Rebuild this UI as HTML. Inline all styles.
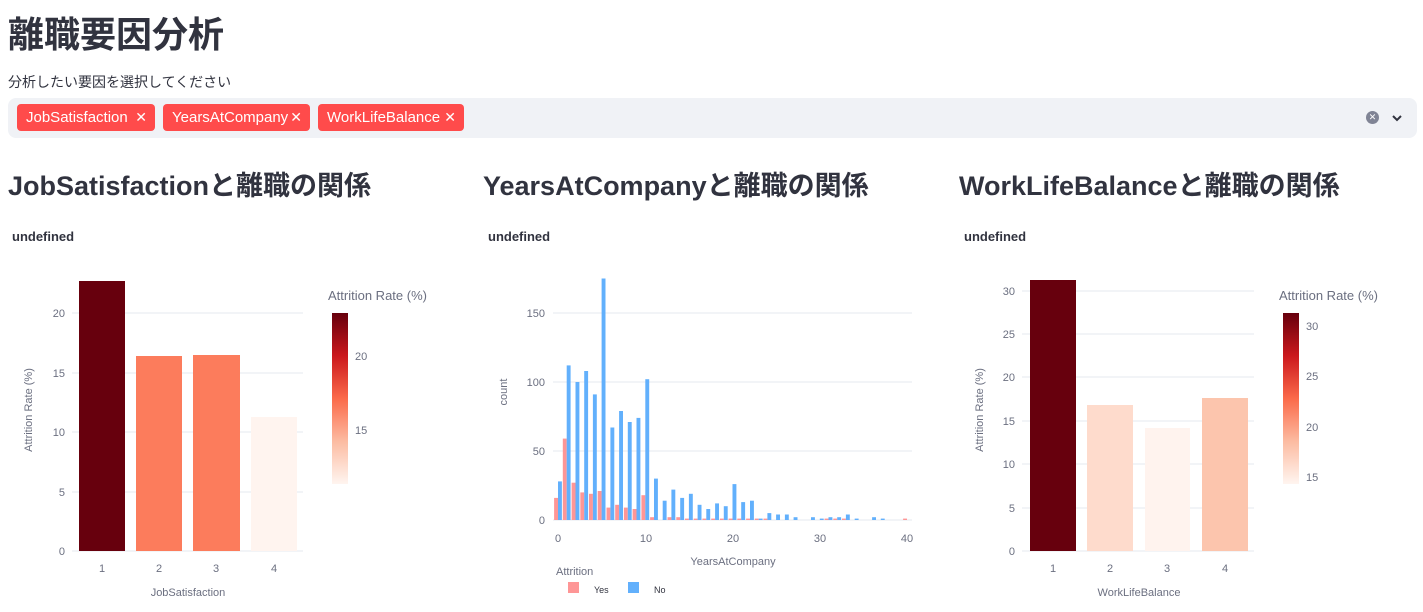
<!DOCTYPE html>
<html><head><meta charset="utf-8"><style>
body{margin:0;width:1423px;height:612px;background:#fff;font-family:"Liberation Sans","Noto Sans CJK JP",sans-serif;color:#31333f;position:relative;overflow:hidden}
.a{position:absolute;white-space:nowrap}
h1{position:absolute;left:8px;top:6px;margin:0;font-size:36px;font-weight:700;font-family:"Noto Sans CJK JP",sans-serif;color:#31333f}
.sel{position:absolute;left:8px;top:98px;width:1409px;height:40px;background:#f0f2f6;border-radius:8px}
.tag{position:absolute;top:6px;height:27px;background:#ff4b4b;color:#fff;border-radius:4px;font-size:15px;line-height:27px;padding-left:9px;box-sizing:border-box}
.tag span{position:absolute;right:8px;top:0;font-size:14px}
h2{position:absolute;top:164px;margin:0;font-size:27px;font-weight:700;font-family:"Liberation Sans","Noto Sans CJK JP",sans-serif}
</style></head><body>
<h1>離職要因分析</h1>
<div class="a" style="left:8px;top:72px;font-size:14px;font-family:'Noto Sans CJK JP',sans-serif">分析したい要因を選択してください</div>
<div class="sel">
<div class="tag" style="left:9px;width:138px">JobSatisfaction<span>✕</span></div>
<div class="tag" style="left:155px;width:147px">YearsAtCompany<span>✕</span></div>
<div class="tag" style="left:310px;width:146px">WorkLifeBalance<span>✕</span></div>
<div style="position:absolute;left:1358px;top:13px;width:13px;height:13px;border-radius:50%;background:#808495;color:#fff;font-size:9px;line-height:13px;text-align:center">✕</div>
<svg style="position:absolute;left:1383px;top:15px" width="12" height="10"><path d="M2 3 L6 7 L10 3" stroke="#31333f" stroke-width="2" fill="none"/></svg>
</div>
<h2 style="left:8px">JobSatisfactionと離職の関係</h2>
<h2 style="left:483px">YearsAtCompanyと離職の関係</h2>
<h2 style="left:959px">WorkLifeBalanceと離職の関係</h2>
<svg class="a" style="left:0;top:0" width="1423" height="612" font-family="Liberation Sans, sans-serif">
<defs>
<linearGradient id="r" x1="0" y1="1" x2="0" y2="0"><stop offset="0" stop-color="#fff5f0"/><stop offset="0.25" stop-color="#fcbba1"/><stop offset="0.5" stop-color="#fb6a4a"/><stop offset="0.75" stop-color="#cb181d"/><stop offset="1" stop-color="#67000d"/></linearGradient>
</defs>
<g font-size="13" font-weight="700" fill="#31333f"><text x="12" y="241">undefined</text><text x="488" y="241">undefined</text><text x="964" y="241">undefined</text></g>
<!-- left chart -->
<g stroke="#e5e8ef" stroke-width="1"><line x1="72" x2="303" y1="313" y2="313"/><line x1="72" x2="303" y1="373" y2="373"/><line x1="72" x2="303" y1="432" y2="432"/><line x1="72" x2="303" y1="492" y2="492"/><line x1="72" x2="303" y1="551" y2="551"/></g>
<rect x="79" y="281" width="46" height="270" fill="#67000d"/>
<rect x="136" y="356" width="46" height="195" fill="#fc7c5c"/>
<rect x="193" y="355" width="47" height="196" fill="#fc7c5c"/>
<rect x="251" y="417" width="46" height="134" fill="#fff4ef"/>
<g font-size="11" fill="#6b6f80" text-anchor="end"><text x="65" y="317">20</text><text x="65" y="377">15</text><text x="65" y="436">10</text><text x="65" y="496">5</text><text x="65" y="555">0</text></g>
<g font-size="11" fill="#6b6f80" text-anchor="middle"><text x="102" y="572">1</text><text x="159" y="572">2</text><text x="216" y="572">3</text><text x="274" y="572">4</text><text x="188" y="596">JobSatisfaction</text></g>
<text transform="translate(32,410) rotate(-90)" font-size="11" fill="#6b6f80" text-anchor="middle">Attrition Rate (%)</text>
<text x="328" y="300" font-size="13" fill="#6b6f80">Attrition Rate (%)</text>
<rect x="332" y="313" width="16" height="171" fill="url(#r)"/>
<g font-size="11" fill="#6b6f80"><text x="355" y="360">20</text><text x="355" y="434">15</text></g>
<!-- right chart -->
<g stroke="#e5e8ef"><line x1="1022" x2="1254" y1="291" y2="291"/><line x1="1022" x2="1254" y1="334" y2="334"/><line x1="1022" x2="1254" y1="377" y2="377"/><line x1="1022" x2="1254" y1="421" y2="421"/><line x1="1022" x2="1254" y1="464" y2="464"/><line x1="1022" x2="1254" y1="508" y2="508"/><line x1="1022" x2="1254" y1="551" y2="551"/></g>
<rect x="1030" y="280" width="46" height="271" fill="#67000d"/>
<rect x="1087" y="405" width="46" height="146" fill="#fedbcc"/>
<rect x="1145" y="428" width="45" height="123" fill="#fff3ee"/>
<rect x="1202" y="398" width="46" height="153" fill="#fcc5ad"/>
<g font-size="11" fill="#6b6f80" text-anchor="end"><text x="1015" y="295">30</text><text x="1015" y="338">25</text><text x="1015" y="381">20</text><text x="1015" y="425">15</text><text x="1015" y="468">10</text><text x="1015" y="512">5</text><text x="1015" y="555">0</text></g>
<g font-size="11" fill="#6b6f80" text-anchor="middle"><text x="1053" y="572">1</text><text x="1110" y="572">2</text><text x="1167" y="572">3</text><text x="1225" y="572">4</text><text x="1139" y="596">WorkLifeBalance</text></g>
<text transform="translate(983,410) rotate(-90)" font-size="11" fill="#6b6f80" text-anchor="middle">Attrition Rate (%)</text>
<text x="1279" y="300" font-size="13" fill="#6b6f80">Attrition Rate (%)</text>
<rect x="1283" y="313" width="16" height="171" fill="url(#r)"/>
<g font-size="11" fill="#6b6f80"><text x="1306" y="330">30</text><text x="1306" y="380">25</text><text x="1306" y="431">20</text><text x="1306" y="481">15</text></g>
<!-- histogram -->
<g stroke="#e5e8ef"><line x1="553" x2="912" y1="313" y2="313"/><line x1="553" x2="912" y1="382" y2="382"/><line x1="553" x2="912" y1="451" y2="451"/><line x1="553" x2="912" y1="520" y2="520"/></g>
<g transform="translate(0,520) scale(1,-1)">
<g fill="#fe9696">
<rect x="554.1" y="0" width="3.9" height="22.1"/><rect x="562.8" y="0" width="3.9" height="81.4"/><rect x="571.6" y="0" width="3.9" height="37.3"/><rect x="580.3" y="0" width="3.9" height="27.6"/><rect x="589" y="0" width="3.9" height="26.2"/><rect x="597.7" y="0" width="3.9" height="29"/><rect x="606.5" y="0" width="3.9" height="12.4"/><rect x="615.2" y="0" width="3.9" height="15.2"/><rect x="623.9" y="0" width="3.9" height="12.4"/><rect x="632.6" y="0" width="3.9" height="11"/><rect x="641.4" y="0" width="3.9" height="24.8"/><rect x="650.1" y="0" width="3.9" height="2.8"/><rect x="667.5" y="0" width="3.9" height="2.8"/><rect x="676.3" y="0" width="3.9" height="2.8"/><rect x="685" y="0" width="3.9" height="1.4"/><rect x="693.7" y="0" width="3.9" height="1.4"/><rect x="702.4" y="0" width="3.9" height="1.4"/><rect x="711.2" y="0" width="3.9" height="1.4"/><rect x="719.9" y="0" width="3.9" height="1.4"/><rect x="728.6" y="0" width="3.9" height="1.4"/><rect x="737.3" y="0" width="3.9" height="1.4"/><rect x="746.1" y="0" width="3.9" height="1.4"/><rect x="754.8" y="0" width="3.9" height="1.4"/><rect x="763.5" y="0" width="3.9" height="1.4"/><rect x="824.6" y="0" width="3.9" height="1.4"/><rect x="833.3" y="0" width="3.9" height="1.4"/><rect x="842" y="0" width="3.9" height="1.4"/><rect x="903.1" y="0" width="3.9" height="1.4"/>
</g>
<g fill="#62b0fc">
<rect x="558" y="0" width="3.9" height="38.6"/><rect x="566.7" y="0" width="3.9" height="154.6"/><rect x="575.5" y="0" width="3.9" height="138"/><rect x="584.2" y="0" width="3.9" height="149"/><rect x="592.9" y="0" width="3.9" height="125.6"/><rect x="601.6" y="0" width="3.9" height="241.5"/><rect x="610.4" y="0" width="3.9" height="92.5"/><rect x="619.1" y="0" width="3.9" height="109"/><rect x="627.8" y="0" width="3.9" height="98"/><rect x="636.5" y="0" width="3.9" height="102.1"/><rect x="645.3" y="0" width="3.9" height="140.8"/><rect x="654" y="0" width="3.9" height="41.4"/><rect x="662.7" y="0" width="3.9" height="19.3"/><rect x="671.4" y="0" width="3.9" height="30.4"/><rect x="680.2" y="0" width="3.9" height="22.1"/><rect x="688.9" y="0" width="3.9" height="26.2"/><rect x="697.6" y="0" width="3.9" height="15.2"/><rect x="706.3" y="0" width="3.9" height="11"/><rect x="715.1" y="0" width="3.9" height="16.6"/><rect x="723.8" y="0" width="3.9" height="13.8"/><rect x="732.5" y="0" width="3.9" height="35.9"/><rect x="741.2" y="0" width="3.9" height="17.9"/><rect x="750" y="0" width="3.9" height="19.3"/><rect x="758.7" y="0" width="3.9" height="1.4"/><rect x="767.4" y="0" width="3.9" height="6.9"/><rect x="776.1" y="0" width="3.9" height="5.5"/><rect x="784.9" y="0" width="3.9" height="5.5"/><rect x="793.6" y="0" width="3.9" height="2.8"/><rect x="811" y="0" width="3.9" height="2.8"/><rect x="819.8" y="0" width="3.9" height="1.4"/><rect x="828.5" y="0" width="3.9" height="2.8"/><rect x="837.2" y="0" width="3.9" height="2.8"/><rect x="845.9" y="0" width="3.9" height="5.5"/><rect x="854.7" y="0" width="3.9" height="1.4"/><rect x="872.1" y="0" width="3.9" height="2.8"/><rect x="880.8" y="0" width="3.9" height="1.4"/>
</g>
</g>
<g font-size="11" fill="#6b6f80" text-anchor="end"><text x="545" y="317">150</text><text x="545" y="386">100</text><text x="545" y="455">50</text><text x="545" y="524">0</text></g>
<g font-size="11" fill="#6b6f80" text-anchor="middle"><text x="558" y="542">0</text><text x="646" y="542">10</text><text x="733" y="542">20</text><text x="820" y="542">30</text><text x="907" y="542">40</text><text x="733" y="565">YearsAtCompany</text></g>
<text transform="translate(507,392) rotate(-90)" font-size="11" fill="#6b6f80" text-anchor="middle">count</text>
<text x="556" y="575" font-size="11" fill="#6b6f80">Attrition</text>
<rect x="568" y="582" width="11" height="11" fill="#fe9696"/><text x="594" y="593" font-size="9" fill="#31333f">Yes</text>
<rect x="628" y="582" width="11" height="11" fill="#62b0fc"/><text x="654" y="593" font-size="9" fill="#31333f">No</text>
</svg>
</body></html>
